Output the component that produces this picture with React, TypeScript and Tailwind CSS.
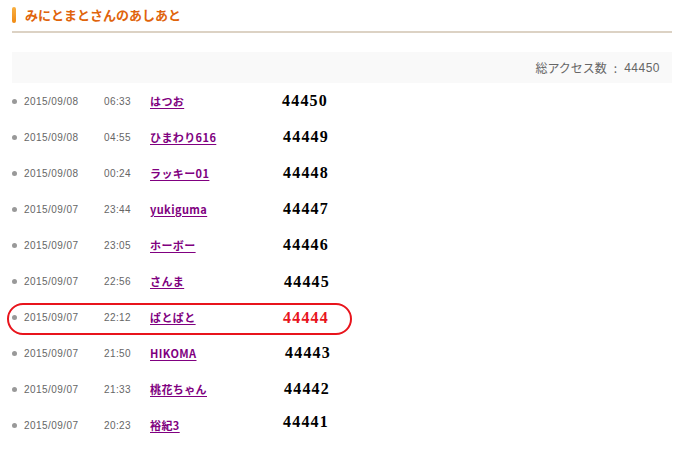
const rows = [
  { date: "2015/09/08", time: "06:33", name: "はつお", count: "44450", dx: 0, dy: 0 },
  { date: "2015/09/08", time: "04:55", name: "ひまわり616", count: "44449", dx: 1, dy: 0 },
  { date: "2015/09/08", time: "00:24", name: "ラッキー01", count: "44448", dx: 1, dy: 0 },
  { date: "2015/09/07", time: "23:44", name: "yukiguma", count: "44447", dx: 1, dy: 0 },
  { date: "2015/09/07", time: "23:05", name: "ホーボー", count: "44446", dx: 1, dy: 0 },
  { date: "2015/09/07", time: "22:56", name: "さんま", count: "44445", dx: 2, dy: 1 },
  { date: "2015/09/07", time: "22:12", name: "ぱとぱと", count: "44444", dx: 1, dy: 1, hit: true },
  { date: "2015/09/07", time: "21:50", name: "HIKOMA", count: "44443", dx: 3, dy: 0 },
  { date: "2015/09/07", time: "21:33", name: "桃花ちゃん", count: "44442", dx: 2, dy: 0 },
  { date: "2015/09/07", time: "20:23", name: "裕紀3", count: "44441", dx: 1, dy: -3 },
];

export default function App() {
  return (
    <div className="w-[681px] h-[463px] bg-white pl-[12px] pr-[9px] pt-[7px] font-['Liberation_Sans','Noto_Sans_CJK_JP',sans-serif]">
      {/* heading */}
      <div className="pb-[8px] border-b-2 border-[#dcd2c4]">
        <div className="flex items-center h-[16px]">
          <div className="w-[4px] h-[16px] rounded-[2px] bg-gradient-to-b from-[#f8b040] to-[#f08a10]" />
          <h1 className="ml-[9px] text-[13px] leading-[16px] font-bold text-[#e0640c] font-['Noto_Sans_CJK_JP',sans-serif]">
            みにとまとさんのあしあと
          </h1>
        </div>
      </div>

      {/* total */}
      <div className="mt-[19px] h-[31px] bg-[#f9f9f9] flex items-center justify-end pr-[12px] text-[12px] text-[#666666] font-['Noto_Sans_CJK_JP',sans-serif]">
        <span>総アクセス数</span>
        <span className="ml-[7px]">:</span>
        <span className="ml-[7px] tracking-[0.5px] font-['Liberation_Sans',sans-serif]">44450</span>
      </div>

      {/* footprints */}
      <ul>
        {rows.map((r, i) => (
          <li key={i} className="relative h-[36px] flex items-center text-[10px] text-[#666666]">
            {r.hit && (
              <div className="absolute left-[-5px] top-[4px] w-[345px] h-[32px] border-2 border-[#e8141c] rounded-[16px]" />
            )}
            <span className="w-[5px] h-[5px] rounded-full bg-[#999999]" />
            <span className="ml-[7px] w-[80px] tracking-[0.45px]">{r.date}</span>
            <span className="w-[46px] tracking-[0.4px]">{r.time}</span>
            <span className="w-[132px]">
              <a
                href="#"
                className="text-[11px] font-bold tracking-[0.4px] text-[#800080] underline underline-offset-2 font-['Noto_Sans_CJK_JP',sans-serif]"
              >
                {r.name}
              </a>
            </span>
            <span
              className={
                "text-[16px] font-bold tracking-[1.2px] font-['Liberation_Serif',serif] " +
                (r.hit ? "text-[#e8141c]" : "text-black")
              }
              style={{ transform: `translate(${r.dx}px, ${r.dy}px)` }}
            >
              {r.count}
            </span>
          </li>
        ))}
      </ul>
    </div>
  );
}
